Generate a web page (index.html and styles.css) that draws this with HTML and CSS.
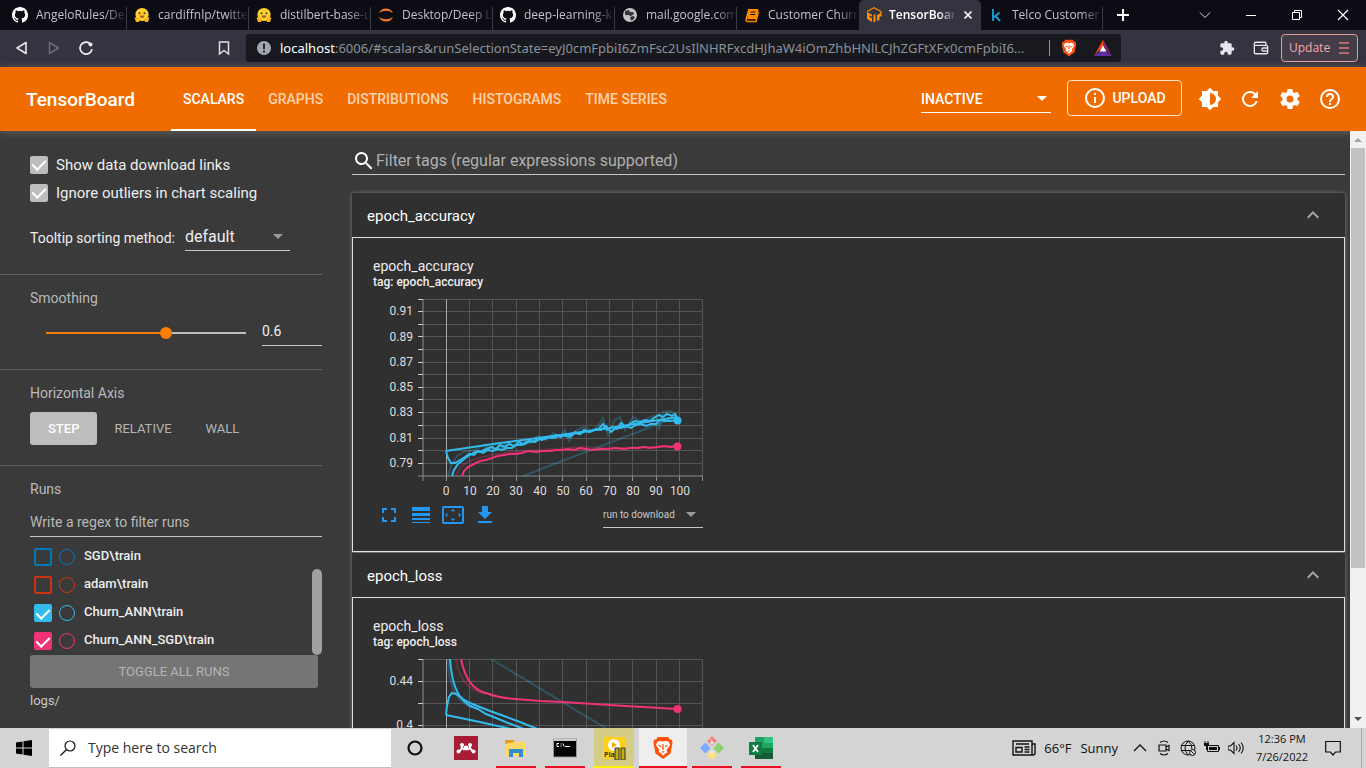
FILE: index.html
```html
<!DOCTYPE html>
<html lang="en">
<head>
<meta charset="utf-8">
<title>TensorBoard</title>
<link rel="stylesheet" href="styles.css">
</head>
<body>
<svg class="defs" width="0" height="0" aria-hidden="true">
  <defs>
    <symbol id="github" viewBox="0 0 16 16"><path fill="#fff" d="M8 0C3.58 0 0 3.58 0 8c0 3.54 2.29 6.53 5.47 7.59.4.07.55-.17.55-.38 0-.19-.01-.82-.01-1.49-2.01.37-2.53-.49-2.69-.94-.09-.23-.48-.94-.82-1.13-.28-.15-.68-.52-.01-.53.63-.01 1.08.58 1.23.82.72 1.21 1.87.87 2.33.66.07-.52.28-.87.51-1.07-1.78-.2-3.64-.89-3.64-3.95 0-.87.31-1.59.82-2.15-.08-.2-.36-1.02.08-2.12 0 0 .67-.21 2.2.82a7.6 7.6 0 0 1 4 0c1.53-1.04 2.2-.82 2.2-.82.44 1.1.16 1.92.08 2.12.51.56.82 1.27.82 2.15 0 3.07-1.87 3.75-3.65 3.95.29.25.54.73.54 1.48 0 1.07-.01 1.93-.01 2.2 0 .21.15.46.55.38A8 8 0 0 0 16 8c0-4.42-3.58-8-8-8z"/></symbol>
    <symbol id="hug" viewBox="0 0 16 16"><circle cx="8" cy="7.500" r="6.600" fill="#ffcf2b"/><path d="M.5 10.500l2.500 0 2.500 2-.5 2.500H2zM15.500 10.500l-2.500 0-2.500 2 .5 2.500h3z" fill="#ffb31a"/><circle cx="5.500" cy="6.300" r="1" fill="#3a3b45"/><circle cx="10.500" cy="6.300" r="1" fill="#3a3b45"/><path d="M5.500 8.500h5Q10 11 8 11T5.500 8.500" fill="#ad5a2b"/></symbol>
    <symbol id="brave" viewBox="0 0 20 24"><path d="M5 1h10l2 2.500 2 .3.500 3.200-2 10.500L10 23 2.500 17.500.5 7 1 3.800 3 3.500z" fill="#fb5210"/><path d="M4.500 5.500l3-.5 2.500.6 2.500-.6 3 .5 1.500 3.500-3.500 5 1 2.500-2.500 1-2 2.500L8 17l-2.500-1 1-2L3 9z" fill="#fff"/><path d="M5 9l3 1-.5 1.200zM15 9l-3 1 .5 1.200zM8.700 15.500h2.600L10 16.800zM9.700 8h.6l.4 5-.7.700-.7-.7z" fill="#fb5210" stroke="#fb5210" stroke-width=".4"/></symbol>
    <symbol id="chevron" viewBox="0 0 24 24"><path fill="#a6a6a6" d="M12 8l-6 6 1.400 1.400 4.600-4.600 4.600 4.600L18 14z"/></symbol>
    <symbol id="fullscreen" viewBox="0 0 24 24"><path fill="#2196f3" d="M7 14H5v5h5v-2H7v-3zm-2-4h2V7h3V5H5v5zm12 7h-3v2h5v-5h-2v3zM14 5v2h3v3h2V5h-5z"/></symbol>
    <symbol id="lines" viewBox="0 0 20 20"><path fill="#2196f3" d="M1 2h18v4H1zM1 8h18v3H1zM1 13h18v2H1zM1 17h18v1H1z"/></symbol>
    <symbol id="fit" viewBox="0 0 22 18"><rect x="1" y="1" width="20" height="16" rx="1" fill="none" stroke="#2196f3" stroke-width="2"/><path fill="#2196f3" d="M11 3l2.300 2.300H8.700zM11 15l2.300-2.300H8.700zM3 9l2.300-2.300v4.600zM19 9l-2.300-2.300v4.600z"/></symbol>
    <symbol id="download" viewBox="0 0 24 24"><path fill="#2196f3" d="M19 9h-4V3H9v6H5l7 7 7-7zM5 18v2h14v-2H5z"/></symbol>
  </defs>
</svg>

<div class="tabstrip">
  <div class="tab"><svg class="fav"><use href="#github"/></svg><span class="tab-title">AngeloRules/De</span></div>
  <div class="tab"><svg class="fav"><use href="#hug"/></svg><span class="tab-title">cardiffnlp/twitte</span></div>
  <div class="tab"><svg class="fav"><use href="#hug"/></svg><span class="tab-title">distilbert-base-u</span></div>
  <div class="tab"><svg class="fav" viewBox="0 0 16 16"><path d="M1 6Q3 1.500 8 1.500T15 6Q11.500 3.800 8 3.800T1 6M1 10Q3 14.500 8 14.500T15 10Q11.500 12.200 8 12.200T1 10" fill="#f37726"/></svg><span class="tab-title">Desktop/Deep L</span></div>
  <div class="tab"><svg class="fav"><use href="#github"/></svg><span class="tab-title">deep-learning-k</span></div>
  <div class="tab"><svg class="fav" viewBox="0 0 16 16"><circle cx="8" cy="8" r="7" fill="#c4c4c8"/><path d="M3 4l4-1 1 2 3 0 1 2-3 2-3-1-3 0zM8 10l3-1 2 1-2 3-2 .5z" fill="#34353c"/></svg><span class="tab-title">mail.google.com</span></div>
  <div class="tab last"><svg class="fav" viewBox="0 0 16 16"><path d="M5 2h9.500L12 13H3z" fill="#ff8a00"/><path d="M5 2L2 12.500Q2 14.500 4 14.500h8l2.500-10" fill="none" stroke="#ff8a00" stroke-width="1.500"/><path d="M6.500 5h5M6 7.500h5M3 12.700h8.500" stroke="#111" stroke-width="1"/></svg><span class="tab-title">Customer Churn</span></div>
  <div class="tab active"><svg class="fav" viewBox="0 0 16 16"><path d="M1 4.500L8 .8l7 3.700v5" fill="none" stroke="#ff8a00" stroke-width="1.200"/><path d="M1 5l5 2.500v2L3.500 8.500v1.500L6 11v4L1 12zM7.500 8l2-1v7.500l-2 1zM11 8l4-2v3l-1.500 1v3L11 14z" fill="#ff8a00"/></svg><span class="tab-title">TensorBoard</span><svg class="tab-close" viewBox="0 0 10 10"><path d="M1.500 1.500l7 7m0-7l-7 7" stroke="#fff" stroke-width="1.700"/></svg></div>
  <div class="tab kaggle"><svg class="fav" viewBox="0 0 16 16"><path d="M5 2v12M11.500 5.500L5.500 10.500M7.500 9l4.500 5" stroke="#1a9bd0" stroke-width="1.900" fill="none"/></svg><span class="tab-title">Telco Customer</span></div>
  <svg class="newtab" viewBox="0 0 12 12"><path d="M6 0v12M0 6h12" stroke="#fff" stroke-width="2"/></svg>
  <div class="winbtns">
    <svg viewBox="0 0 12 12"><path d="M1 3.500l5 5 5-5" stroke="#ddd" fill="none"/></svg>
    <svg viewBox="0 0 12 12"><path d="M1 6.500h10" stroke="#fff"/></svg>
    <svg viewBox="0 0 12 12"><path d="M1.500 3.500h7v7h-7zM3.500 3.500v-2h7v7h-2" stroke="#fff" fill="none"/></svg>
    <svg viewBox="0 0 12 12"><path d="M1 1l10 10m0-10L1 11" stroke="#fff" stroke-width="1.200"/></svg>
  </div>
</div>

<div class="toolbar">
  <div class="nav">
    <svg viewBox="0 0 16 16"><path d="M12 2.500v11L3 8z" fill="none" stroke="#e6e6ea" stroke-width="1.600" stroke-linejoin="round"/></svg>
    <svg viewBox="0 0 16 16"><path d="M3.500 2.500v11l9-5.500z" fill="none" stroke="#6b6c77" stroke-width="1.500" stroke-linejoin="round"/></svg>
    <svg viewBox="0 0 16 16"><path d="M11.500 3.200A6 6 0 1 0 14 9" fill="none" stroke="#f0f0f3" stroke-width="1.700"/><circle cx="12.500" cy="4.500" r="2" fill="#f0f0f3"/></svg>
  </div>
  <svg class="bookmark" viewBox="0 0 16 16"><path d="M3.500 2h9v12L8 10.500 3.500 14z" fill="none" stroke="#dedee3" stroke-width="1.500"/></svg>
  <div class="urlbar">
    <svg class="info" viewBox="0 0 14 14"><circle cx="7" cy="7" r="7" fill="#a5a7b0"/><path d="M7 2.500v5.500M7 9.500v2" stroke="#17191f" stroke-width="1.800"/></svg>
    <div class="url"><b>localhost</b>:6006/#scalars&amp;runSelectionState=eyJ0cmFpbiI6ZmFsc2UsIlNHRFxcdHJhaW4iOmZhbHNlLCJhZGFtXFx0cmFpbiI6...</div>
    <i class="urlsep"></i>
    <svg class="shield" viewBox="0 0 20 24"><use href="#brave"/></svg>
    <svg class="bat" viewBox="0 0 18 16"><path d="M9 0l4.500 8L9 6.500 5 10.500 0 16z" fill="#ff4a16"/><path d="M9 0l9 16-5.500-5.500L9 5z" fill="#8b2478"/><path d="M0 16h18l-5.500-4.500h-7z" fill="#5b2fa0"/><path d="M9 5.500l3.500 6h-7z" fill="#fff"/></svg>
  </div>
  <div class="extras">
    <svg viewBox="0 0 24 24"><path fill="#e6e6ea" d="M20.500 11H19V7a2 2 0 0 0-2-2h-4V3.500a2.500 2.500 0 0 0-5 0V5H4a2 2 0 0 0-2 2v3.800h1.500a2.700 2.700 0 0 1 0 5.400H2V20c0 1.100.9 2 2 2h3.800v-1.500a2.700 2.700 0 0 1 5.400 0V22H17a2 2 0 0 0 2-2v-4h1.500a2.500 2.500 0 0 0 0-5z"/></svg>
    <svg viewBox="0 0 18 16"><path d="M3 5h12q1.500 0 1.500 1.500V13q0 1.500-1.500 1.500H3q-1.500 0-1.500-1.500V3Q1.500 1.500 3 1.500h10.500q1 0 1 1V5M1.500 4Q2 5 3 5M16.500 8h-5q-1.500 0-1.500 1.700t1.500 1.700h5" fill="none" stroke="#e6e6ea" stroke-width="1.500"/></svg>
  </div>
  <button class="update"><span>Update</span><svg viewBox="0 0 10 12"><path d="M0 1h10M0 6h10M0 11h10" stroke="#d97878" stroke-width="1.600"/></svg></button>
</div>

<header class="header">
  <div class="brand">TensorBoard</div>
  <nav class="plugins">
    <a href="#scalars" class="on">SCALARS</a><a href="#graphs">GRAPHS</a><a href="#distributions">DISTRIBUTIONS</a><a href="#histograms">HISTOGRAMS</a><a href="#timeseries">TIME SERIES</a>
  </nav>
  <div class="select inactive"><select aria-label="Inactive plugins"><option>INACTIVE</option></select></div>
  <button class="upload"><svg viewBox="0 0 24 24"><path fill="#fff" d="M11 7h2v2h-2zm0 4h2v6h-2zm1-9a10 10 0 1 0 0 20 10 10 0 0 0 0-20zm0 18a8 8 0 1 1 0-16 8 8 0 0 1 0 16z"/></svg>UPLOAD</button>
  <div class="actions">
    <button aria-label="Theme"><svg viewBox="0 0 24 24"><path fill="#fff" d="M20 15.310L23.310 12 20 8.690V4h-4.690L12 .69 8.690 4H4v4.690L.69 12 4 15.310V20h4.690L12 23.310 15.310 20H20v-4.690zM12 18V6a6 6 0 0 1 0 12z"/></svg></button>
    <button aria-label="Reload"><svg viewBox="0 0 24 24"><path fill="#fff" d="M17.650 6.350A8 8 0 1 0 19.730 14h-2.080A6 6 0 1 1 12 6c1.660 0 3.140.69 4.220 1.780L13 11h7V4l-2.350 2.350z"/></svg></button>
    <button aria-label="Settings"><svg viewBox="0 0 24 24"><path fill="#fff" d="M19.430 12.980c.04-.32.07-.64.07-.98s-.03-.66-.07-.98l2.110-1.650c.19-.15.24-.42.12-.64l-2-3.460c-.12-.22-.39-.3-.61-.22l-2.490 1c-.52-.4-1.080-.73-1.690-.98l-.38-2.650A.49.49 0 0 0 14 2h-4c-.25 0-.46.18-.49.42l-.38 2.650c-.61.25-1.170.59-1.690.98l-2.490-1c-.23-.09-.49 0-.61.22l-2 3.460c-.13.22-.07.49.12.64l2.110 1.650c-.04.32-.07.65-.07.98s.03.66.07.98l-2.110 1.650c-.19.15-.24.42-.12.64l2 3.460c.12.22.39.3.61.22l2.490-1c.52.4 1.080.73 1.690.98l.38 2.650c.03.24.24.42.49.42h4c.25 0 .46-.18.49-.42l.38-2.650c.61-.25 1.170-.59 1.690-.98l2.490 1c.23.09.49 0 .61-.22l2-3.460c.12-.22.07-.49-.12-.64l-2.110-1.650zM12 15.500a3.500 3.500 0 1 1 0-7 3.500 3.500 0 0 1 0 7z"/></svg></button>
    <button aria-label="Help"><svg viewBox="0 0 24 24"><path fill="#fff" d="M11 18h2v-2h-2v2zm1-16a10 10 0 1 0 0 20 10 10 0 0 0 0-20zm0 18a8 8 0 1 1 0-16 8 8 0 0 1 0 16zm0-14a4 4 0 0 0-4 4h2a2 2 0 1 1 4 0c0 2-3 1.750-3 5h2c0-2.250 3-2.500 3-5a4 4 0 0 0-4-4z"/></svg></button>
  </div>
</header>

<main class="page">
  <aside class="sidebar">
    <section class="group options">
      <label class="check"><input type="checkbox" checked>Show data download links</label>
      <label class="check"><input type="checkbox" checked>Ignore outliers in chart scaling</label>
      <div class="sorting"><label for="sort">Tooltip sorting method:</label><div class="select"><select id="sort"><option>default</option></select></div></div>
    </section>
    <section class="group">
      <h3><label for="smooth">Smoothing</label></h3>
      <div class="smoothing"><input type="range" id="smooth" min="0" max="1" step="0.1" value="0.6"><input type="text" class="num" value="0.6" aria-label="Smoothing value"></div>
    </section>
    <section class="group axis">
      <h3>Horizontal Axis</h3>
      <div class="modes"><button class="on">STEP</button><button>RELATIVE</button><button>WALL</button></div>
    </section>
    <section class="runs">
      <h3>Runs</h3>
      <input type="text" class="regex" placeholder="Write a regex to filter runs" aria-label="Filter runs">
      <div class="runlist">
        <div class="rows">
          <label class="run sgd"><input type="checkbox"><i></i><span>SGD\train</span></label>
          <label class="run adam"><input type="checkbox"><i></i><span>adam\train</span></label>
          <label class="run ann"><input type="checkbox" checked><i></i><span>Churn_ANN\train</span></label>
          <label class="run annsgd"><input type="checkbox" checked><i></i><span>Churn_ANN_SGD\train</span></label>
        </div>
        <div class="runbar"></div>
      </div>
      <button class="toggle">TOGGLE ALL RUNS</button>
      <div class="logs">logs/</div>
    </section>
  </aside>

  <div class="content">
    <div class="filter"><svg viewBox="0 0 24 24"><path fill="#fff" d="M15.500 14h-.79l-.28-.27a6.500 6.500 0 1 0-.7.7l.27.28v.79l5 4.990L20.490 19l-4.990-5zm-6 0a4.500 4.500 0 1 1 0-9 4.500 4.500 0 0 1 0 9z"/></svg><input type="text" placeholder="Filter tags (regular expressions supported)" aria-label="Filter tags"></div>

    <section class="card">
      <button class="card-head"><span>epoch_accuracy</span><svg viewBox="0 0 24 24"><use href="#chevron"/></svg></button>
      <div class="card-body">
        <h4>epoch_accuracy</h4>
        <p>tag: epoch_accuracy</p>
        <svg class="chart" viewBox="373 292 336 208">
          <path class="grid" d="M469.500 299v177M492.500 299v177M516.500 299v177M539.500 299v177M562.500 299v177M586.500 299v177M609.500 299v177M632.500 299v177M656.500 299v177M679.500 299v177M702.500 299v177M423 299.500h280M423 311.500h280M423 324.500h280M423 336.500h280M423 349.500h280M423 362.500h280M423 374.500h280M423 387.500h280M423 399.500h280M423 412.500h280M423 425.500h280M423 438.500h280M423 450.500h280M423 463.500h280"/>
          <path class="zero" d="M446.500 299v177"/>
          <path class="axisline" d="M423 299v182M418 476h285M446.500 476v5M469.500 476v5M492.500 476v5M516.500 476v5M539.500 476v5M562.500 476v5M586.500 476v5M609.500 476v5M632.500 476v5M656.500 476v5M679.500 476v5M702.500 476v5"/>
          <path class="ticks" d="M418 299.500h5M418 311.500h5M418 324.500h5M418 336.500h5M418 349.500h5M418 362.500h5M418 374.500h5M418 387.500h5M418 399.500h5M418 412.500h5M418 425.500h5M418 438.500h5M418 450.500h5M418 463.500h5"/>
          <path class="blue faint" d="M523 476L656 425 677 416"/>
          <path class="blue faint" d="M448 476L451 466 457 456 464 452 475 450 484 445 489 450 496 443 502 448 508 441 514 447 522 440 530 443 538 436 546 440 553 433 560 438 565 430 569 441 576 430 584 427 592 431 598 426 603 418 608 435 614 421 620 417 625 430 633 417 642 422 650 417 657 416 659 430 663 412 671 411 677 418"/>
          <path class="pink faint" d="M456 476L460 468 467 462 478 458 492 455 510 452 540 450 580 447 620 448 650 447 677 446"/>
          <path class="blue" d="M446 451L500 443 560 435 610 428 677 417"/>
          <path class="blue" d="M446 451L448 458 451 463 455 463 460 460 465 457 469 454 474 455 478 451 483 453 488 450 493 451 498 449 502 450 507 448 512 448 516 445 521 445 525 444 530 441 535 442 540 439 545 439 550 437 555 438 560 435 566 436 570 437 575 433 580 434 585 431 590 432 596 429 601 430 606 426 611 432 616 428 621 428 626 426 631 428 636 425 641 424 646 426 651 424 656 424 660 420 665 421 670 421 677 420"/>
          <path class="blue" d="M452 476L454 470 458 464 463 460 468 456 475 452 482 451 486 449 491 447 496 449 500 445 505 447 509 444 514 446 519 442 523 444 528 441 533 442 538 438 542 440 547 437 552 438 556 435 561 437 566 434 570 435 575 432 580 434 584 430 589 432 594 430 598 430 603 424 607 430 612 427 617 429 621 423 626 427 631 423 635 421 640 422 645 420 650 421 654 418 659 415 663 417 667 414 672 416 675 414 677 417"/>
          <path class="pink" d="M462 476L464 471 468 467 474 464 480 461 486 460 492 458 498 456 504 455 510 454 516 454 522 453 528 451 536 452 542 451 550 451 556 450 562 450 568 449 574 450 580 448 586 449 592 450 600 449 608 449 616 448 624 449 630 448 638 448 644 447 650 448 658 447 664 446 670 447 677 446"/>
          <circle cx="677.500" cy="420.500" r="4" fill="#33bbee"/><circle cx="677.500" cy="446.500" r="4" fill="#ee3377"/>
          <g class="ylab"><text x="413" y="315">0.91</text><text x="413" y="341">0.89</text><text x="413" y="366">0.87</text><text x="413" y="391">0.85</text><text x="413" y="416">0.83</text><text x="413" y="442">0.81</text><text x="413" y="467">0.79</text></g>
          <g class="xlab"><text x="446" y="495">0</text><text x="470" y="495">10</text><text x="493" y="495">20</text><text x="516" y="495">30</text><text x="540" y="495">40</text><text x="563" y="495">50</text><text x="586" y="495">60</text><text x="610" y="495">70</text><text x="633" y="495">80</text><text x="656" y="495">90</text><text x="680" y="495">100</text></g>
        </svg>
        <div class="chart-tools">
          <button aria-label="Full screen"><svg><use href="#fullscreen"/></svg></button>
          <button aria-label="Log scale"><svg class="w20"><use href="#lines"/></svg></button>
          <button aria-label="Fit domain"><svg class="w22"><use href="#fit"/></svg></button>
          <button aria-label="Download"><svg><use href="#download"/></svg></button>
          <div class="select rundl"><select aria-label="Run to download"><option>run to download</option></select></div>
        </div>
      </div>
    </section>

    <section class="card">
      <button class="card-head"><span>epoch_loss</span><svg viewBox="0 0 24 24"><use href="#chevron"/></svg></button>
      <div class="card-body">
        <h4>epoch_loss</h4>
        <p>tag: epoch_loss</p>
        <svg class="chart" viewBox="373 652 336 208">
          <path class="grid" d="M469.500 659v177M492.500 659v177M516.500 659v177M539.500 659v177M562.500 659v177M586.500 659v177M609.500 659v177M632.500 659v177M656.500 659v177M679.500 659v177M702.500 659v177M423 659.500h280M423 681.500h280M423 703.500h280M423 725.500h280"/>
          <path class="zero" d="M446.500 659v177"/>
          <path class="axisline" d="M423 659v177"/>
          <path class="ticks" d="M418 659.500h5M418 681.500h5M418 703.500h5M418 725.500h5"/>
          <path class="blue faint" d="M491 659L627 741M448 659l1 16 4 14 6 10 9 7"/>
          <path class="pink faint" d="M456 659Q460 689 486 694"/>
          <path class="blue" d="M446 715L480 722 520 731"/>
          <path class="blue" d="M446 715L447 706 449 697 452 693 456 694 463 699 470 703 480 707 490 711 504 716 520 722 540 730"/>
          <path class="blue" d="M450 659Q452 690 464 701L470 706 478 709 486 714 496 718 508 723 524 729"/>
          <path class="pink" d="M461 659Q467 689 486 693Q499 698 516 699L540 701 563 702 609 705 660 708 677 709"/>
          <circle cx="677.500" cy="709" r="4" fill="#ee3377"/>
          <g class="ylab"><text x="413" y="685">0.44</text><text x="413" y="729">0.4</text></g>
        </svg>
      </div>
    </section>
  </div>

  <div class="scrollbar"><i class="up"></i><div class="thumb"></div><i class="down"></i></div>
</main>

<footer class="taskbar">
  <svg class="start" viewBox="0 0 16 16"><path d="M0 2.500L6.500 1.500v6H0zM7.500 1.300L16 0v7.500H7.500zM0 8.500h6.500v6L0 13.500zM7.500 8.500H16V16l-8.500-1.300z"/></svg>
  <label class="search"><svg viewBox="0 0 16 16"><circle cx="10" cy="6" r="5" fill="none" stroke="#111" stroke-width="1.200"/><path d="M6.300 9.700L.5 15.500" stroke="#111" stroke-width="1.300"/></svg><input type="text" placeholder="Type here to search"></label>
  <div class="apps">
    <div class="app plain"><svg viewBox="0 0 24 24"><circle cx="12" cy="12" r="6.500" fill="none" stroke="#111" stroke-width="2.200"/></svg></div>
    <div class="app plain"><svg viewBox="0 0 24 24"><path d="M0 0h24v24H0z" fill="#a81c35"/><path d="M4.500 15.500Q8 14 8 9.500M19.500 15.500Q16 14 16 9.500M8 9.500Q8.500 15.500 12 12Q15.500 15.500 16 9.500" fill="none" stroke="#fff" stroke-width="1.800"/><circle cx="8" cy="9" r="2" fill="#fff"/><circle cx="16" cy="9" r="2" fill="#fff"/><circle cx="12" cy="12" r="2.400" fill="#fff"/><circle cx="4.500" cy="15.500" r="2" fill="#fff"/><circle cx="19.500" cy="15.500" r="2" fill="#fff"/></svg></div>
    <div class="app"><svg viewBox="0 0 24 24"><path d="M1 4h8l2 2h11v14H1z" fill="#e5a01a"/><path d="M1 8l9-2h12v14H1z" fill="#ffd868"/><path d="M5 13h14v8h-4v-4H9v4H5z" fill="#338bd0"/></svg></div>
    <div class="app"><svg viewBox="0 0 24 24"><path d="M.5 3h23v18H.5z" fill="#050505" stroke="#999"/><path d="M1 3h22v2H1z" fill="#ccc"/><path d="M12 10.500h5M6 7.500H4v3h2M8 7.500v1m0 1v1M10 7.500l1 3" stroke="#fff" fill="none"/></svg></div>
    <div class="app player"><svg viewBox="0 0 24 24"><rect x="1" y="1" width="22" height="22" rx="2" fill="#ffd017"/><circle cx="12" cy="9" r="6" fill="#fff"/><path d="M10 6l5 3-5 3z" fill="#eeb000"/><path d="M13 12h4v12h-4zM19 12h4v12h-4z" fill="#bfae14" stroke="#333" stroke-width="1"/><text x="2" y="21" class="play-name">Pla</text></svg></div>
    <div class="app current"><svg viewBox="0 0 20 24"><use href="#brave"/></svg></div>
    <div class="app"><svg viewBox="0 0 24 24"><path d="M12 0l5 5-5 5-5-5z" fill="#ff8080"/><path d="M5.500 6.500l5 5.500-5 5.500L0 12z" fill="#7ba9ff"/><path d="M18.500 6.500L24 12l-5.500 5.500-5-5.500z" fill="#8bd16b"/><path d="M12 14l5 5-5 5-5-5z" fill="#ffe27d"/><path d="M9.500 2.500L15 8M12 6v10" stroke="#d4d4d4"/><circle cx="12" cy="6.500" r="1.500" fill="#eee"/><circle cx="12" cy="16" r="1.500" fill="#eee"/></svg></div>
    <div class="app"><svg viewBox="0 0 24 24"><path d="M6 1h18v22H6z" fill="#21a366"/><path d="M15 1h9v6h-9z" fill="#33c481"/><path d="M6 12h9v11H6zM15 12h9v5h-9z" fill="#107c41"/><path d="M6 17h18v6H6z" fill="#185c37"/><path d="M0 6h13v13H0z" fill="#107c41"/><path d="M4 9l5 7M9 9l-5 7" stroke="#fff" stroke-width="1.800"/></svg></div>
  </div>
  <div class="tray">
    <svg class="news" viewBox="0 0 24 16"><path d="M1 1h19v14H1zM20 4h3v9q0 2-2 2h-3M4 4h13M4 7.500h6V12H4zM12.500 7h5M12.500 9.500h5M12.500 12h5" fill="none" stroke="#111" stroke-width="1.400"/></svg>
    <div class="weather"><span>66°F</span><span>Sunny</span></div>
    <div class="tray-icons">
      <svg viewBox="0 0 16 16"><path d="M2 11l6-6 6 6" fill="none" stroke="#111" stroke-width="1.300"/></svg>
      <svg viewBox="0 0 16 16"><path d="M3 5h7v6H3zM10 7l3-1.500v5L10 9M4 2.500Q8-.5 12 2.500M4 13.500q4 3 8 0" fill="none" stroke="#111" stroke-width="1.200"/></svg>
      <svg viewBox="0 0 16 16"><circle cx="8" cy="8" r="7" fill="none" stroke="#111"/><path d="M1 5.500h13M1 10.500h9M8 1q-6 7 0 14M8 1q4 3 4 8" fill="none" stroke="#111"/><circle cx="12.500" cy="12.500" r="3" fill="#d4d4d4" stroke="#111"/><path d="M10.500 10.500l4 4" stroke="#111"/></svg>
      <svg viewBox="0 0 16 16"><path d="M3.500 5.500h11v6h-11z" fill="none" stroke="#111"/><path d="M5 7h8v3H5zM15 7h1v3h-1zM0 3h5v3H0z" fill="#111"/><path d="M2.500 6v4M1 1v2M4 1v2" stroke="#111"/></svg>
      <svg viewBox="0 0 16 16"><path d="M0 6h2.500L6 2.500v11L2.500 10H0zM8 5.500q2 2.500 0 5M10.500 4q3.500 4 0 8M13 2.500q4.500 5.500 0 11" fill="none" stroke="#111" stroke-width="1.100"/></svg>
    </div>
    <div class="clock"><div>12:36 PM</div><div>7/26/2022</div></div>
    <svg class="notif" viewBox="0 0 16 16"><path d="M.7 1.500h14.600v10.500H10.500L8 15l-2.500-3H.7z" fill="none" stroke="#111" stroke-width="1.200"/></svg>
    <i class="peek"></i>
  </div>
</footer>
</body>
</html>
```
FILE: styles.css
```css
* { box-sizing: border-box; }
body { margin: 0; height: 100vh; display: flex; flex-direction: column; overflow: hidden; background: #3a3a3a; color: #fff; font-family: Roboto, sans-serif; font-size: 14px; }
button, input, select { font: inherit; color: inherit; background: none; border: 0; padding: 0; margin: 0; border-radius: 0; outline: 0; }
button { cursor: pointer; }
svg { display: block; flex: none; }
h3, h4, p { margin: 0; font-weight: 400; }
.defs { position: absolute; }

/* Browser tabs */
.tabstrip { height: 30px; flex: none; display: flex; align-items: center; background: #0c0c14; padding-left: 5px; font: 12px/16px "Open Sans", sans-serif; color: #c3c3c8; }
.tab { width: 122px; height: 30px; display: flex; align-items: center; gap: 8px; padding-left: 7px; background: linear-gradient(#3b3b42, #3b3b42) right bottom / 1px 23px no-repeat; }
.tab.last { background: none; }
.tab.active { background: #33343f; border-radius: 5px 5px 0 0; padding: 0 8px 0 7px; gap: 7px; color: #fff; font-weight: 600; }
.fav { width: 16px; height: 16px; }
.tab-title { flex: 1; min-width: 0; white-space: nowrap; overflow: hidden; -webkit-mask-image: linear-gradient(90deg, #000 75%, transparent); mask-image: linear-gradient(90deg, #000 75%, transparent); }
.tab-close { width: 10px; height: 10px; }
.newtab { width: 12px; height: 12px; margin-left: 14px; }
.winbtns { display: flex; gap: 34px; margin-left: auto; padding-right: 17px; }
.winbtns svg { width: 12px; height: 12px; }

/* Browser toolbar */
.toolbar { height: 37px; flex: none; display: flex; align-items: center; background: #33343f; padding: 0 8px 1px 14px; }
.nav { display: flex; gap: 16px; }
.nav svg, .bookmark { width: 16px; height: 16px; }
.bookmark { margin: 0 14px 0 122px; }
.urlbar { flex: 1; min-width: 0; height: 28px; display: flex; align-items: center; background: #17191f; border-radius: 3px; padding: 0 9px 0 11px; font: 13px/20px "Noto Sans", sans-serif; color: #8e9197; }
.info { width: 14px; height: 14px; margin-right: 9px; }
.url { flex: 1; min-width: 0; white-space: nowrap; overflow: hidden; }
.url b { color: #fff; font-weight: 400; }
.urlsep { width: 1px; height: 16px; background: #8e9197; margin: 0 11px 0 6px; }
.shield { width: 16px; height: 18px; }
.bat { width: 18px; height: 16px; margin-left: 17px; }
.extras { display: flex; align-items: center; gap: 18px; margin: 0 12px 0 98px; }
.extras svg { width: 16px; height: 16px; }
.update { width: 77px; height: 28px; display: flex; align-items: center; justify-content: space-between; padding: 0 8px 0 7px; border: 1px solid #e59a9a; border-radius: 4px; background: #443c49; color: #f5a9a9; font: 12px/16px "Open Sans", sans-serif; }
.update svg { width: 10px; height: 12px; }

/* App header */
.header { height: 64px; flex: none; display: flex; align-items: center; background: #f06c00; padding: 0 24px 0 26px; box-shadow: 0 1px 8px rgba(255, 255, 255, .22); z-index: 1; font-weight: 500; }
.brand { width: 145px; font-size: 19px; font-weight: 500; }
.plugins { display: flex; height: 64px; }
.plugins a { display: flex; align-items: center; padding: 0 12px; color: rgba(255, 255, 255, .7); text-decoration: none; border-bottom: 2px solid transparent; border-top: 1px solid transparent; }
.plugins a.on { color: #fff; border-bottom-color: #fff; }
.select { display: flex; align-items: center; border-bottom: 1px solid #c8c8c8; position: relative; }
.select select { flex: 1; width: 100%; appearance: none; }
.select::after { content: ""; position: absolute; right: 7px; border: 5px solid transparent; border-top-color: #9b9b9b; border-bottom: 0; pointer-events: none; }
.inactive { width: 130px; height: 28px; margin-left: auto; border-color: #fff; }
.inactive::after { right: 4px; border-top-color: #fff; }
.upload { width: 115px; height: 36px; margin: 0 0 2px 16px; display: flex; align-items: center; justify-content: center; gap: 5px; border: 1px solid #ffe3cc; border-radius: 4px; font-weight: 500; }
.upload svg { width: 24px; height: 24px; }
.actions { display: flex; gap: 16px; margin-left: 16px; }
.actions svg { width: 24px; height: 24px; }

/* Page */
.page { flex: 1; min-height: 0; display: flex; overflow: hidden; }
.sidebar { width: 322px; flex: none; color: #eee; }
.group { border-bottom: 1px solid #606060; padding: 13px 0 0 30px; height: 95px; }
.group.options { height: 144px; padding-top: 20px; }
.group.axis { height: 96px; }
h3 { font-size: 14px; line-height: 20px; color: #b9b9b9; }
.check { display: flex; align-items: center; height: 28px; gap: 8px; font-size: 15px; }
.check input, .run input { appearance: none; width: 18px; height: 18px; border-radius: 2px; background: #bdbdbd; display: grid; place-items: center; }
.check input:checked::before, .run input:checked::before { content: ""; width: 6px; height: 11px; margin-bottom: 3px; border: solid #fff; border-width: 0 2px 2px 0; transform: rotate(45deg); }
.sorting { display: flex; align-items: center; gap: 10px; margin-top: 16px; font-size: 14px; }
.sorting label { padding-top: 2px; }
.sorting .select { width: 105px; height: 28px; font-size: 16px; }
.sorting .select::after { right: 7px; }
.smoothing { display: flex; align-items: center; gap: 10px; padding-left: 10px; margin-top: 10px; }
.smoothing input[type=range] { appearance: none; width: 212px; height: 12px; margin-top: 1px; background: linear-gradient(#f57c00, #f57c00) 6px 50% / 120px 2px no-repeat, linear-gradient(#bdbdbd, #bdbdbd) 6px 50% / 200px 2px no-repeat; }
.smoothing input[type=range]::-webkit-slider-thumb { appearance: none; width: 12px; height: 12px; border-radius: 50%; background: #ff8000; }
.num { width: 60px; height: 28px; border-bottom: 1px solid #c8c8c8; padding-bottom: 1px; }
.modes { display: flex; margin-top: 9px; font-size: 13px; }
.modes button { height: 33px; padding: 0 17px; color: #b5b5b5; border-radius: 3px; }
.modes button.on { background: #bdbdbd; color: #fff; font-weight: 500; padding: 0 18px; }
.runs { padding: 13px 0 0 30px; }
.regex { display: block; width: 100%; height: 28px; margin-top: 10px; padding-bottom: 2px; border-bottom: 1px solid #c8c8c8; }
.regex::placeholder { color: #b9b9b9; opacity: 1; }
.runlist { display: flex; height: 118px; padding-top: 6px; }
.rows { flex: 1; }
.run { display: flex; align-items: center; height: 28px; padding-left: 4px; font-size: 13px; font-weight: 500; }
.run span { padding-bottom: 3px; }
.run input { background: none; border: 2px solid var(--c); }
.run input:checked { background: var(--c); }
.run i { width: 16px; height: 16px; border: 1px solid var(--c); border-radius: 50%; margin: 0 9px 0 7px; }
.sgd { --c: #0077bb; } .adam { --c: #cc3311; } .ann { --c: #33bbee; } .annsgd { --c: #ee3377; }
.runbar { width: 10px; height: 86px; align-self: flex-end; border-radius: 5px; background: #a0a0a0; }
.toggle { display: block; width: 288px; height: 33px; background: #757575; color: #b5b5b5; border-radius: 3px; font-size: 13px; }
.logs { font-size: 13px; line-height: 20px; margin-top: 3px; color: #c8c8c8; }

.content { flex: 1; min-width: 0; padding: 16px 5px 0 30px; }
.filter { display: flex; align-items: center; height: 28px; border-bottom: 1px solid #c8c8c8; font-size: 16px; margin-bottom: 18px; }
.filter svg { width: 24px; height: 24px; }
.filter input { flex: 1; }
.filter input::placeholder { color: #b0b0b0; opacity: 1; }
.card { box-shadow: 0 0 4px rgba(255, 255, 255, .35); margin-bottom: 1px; }
.card-head { display: flex; width: 100%; height: 44px; align-items: center; justify-content: space-between; padding: 0 20px 0 15px; background: #303030; font-size: 15px; }
.card-head span { padding-top: 2px; }
.card-head svg { width: 24px; height: 24px; }
.card-body { height: 315px; border: 1px solid #e0e0e0; background: #303030; padding: 20px 20px 0; color: #eee; }
h4 { font-size: 14px; line-height: 16px; }
.card-body p { font-size: 12px; line-height: 16px; font-weight: 500; }
.chart { width: 336px; height: 208px; margin-top: 2px; font-size: 12px; fill: #ddd; }
.chart path { fill: none; }
.grid { stroke: #555; }
.zero { stroke: #a8a8a8; }
.axisline { stroke: #8d8d8d; }
.ticks { stroke: #d0d0d0; }
.blue { stroke: #33bbee; stroke-width: 2; }
.pink { stroke: #ee3377; stroke-width: 2; }
.faint { opacity: .25; }
.ylab { text-anchor: end; }
.xlab { text-anchor: middle; }
.chart-tools { display: flex; align-items: center; width: 330px; height: 30px; }
.chart-tools button { width: 32px; height: 24px; display: grid; place-items: center; }
.chart-tools svg { width: 24px; height: 24px; }
.chart-tools .w20 { width: 20px; height: 20px; }
.chart-tools .w22 { width: 22px; height: 18px; }
.rundl { width: 100px; height: 26px; margin-left: auto; font-size: 10px; color: #c8c8c8; }

.scrollbar { width: 16px; flex: none; display: flex; flex-direction: column; align-items: center; background: #f1f1f1; padding: 7px 0; }
.scrollbar .up, .scrollbar .down { border: 4px solid transparent; }
.scrollbar .up { border-top: 0; border-bottom-color: #a3a3a3; }
.scrollbar .down { border-bottom: 0; border-top-color: #505050; margin-top: auto; }
.thumb { width: 14px; height: 72%; background: #c1c1c1; margin-top: 6px; }

/* Taskbar */
.taskbar { height: 40px; flex: none; display: flex; align-items: center; background: #d4d4d4; color: #111; font: 14px/20px "Open Sans", sans-serif; }
.start { width: 16px; height: 16px; margin: 0 17px 0 16px; }
.search { width: 342px; height: 39px; display: flex; align-items: center; gap: 12px; background: #fff; border-bottom: 1px solid #c0c0c0; padding-left: 11px; }
.search svg { width: 16px; height: 16px; }
.search input { flex: 1; }
.search input::placeholder { color: #333; opacity: 1; }
.apps { display: flex; height: 40px; gap: 9px; }
.app { width: 40px; display: grid; place-items: center; border-bottom: 2px solid #e81123; padding-top: 2px; }
.app svg { width: 24px; height: 24px; }
.app.plain { width: 42px; border-color: transparent; }
.app.plain:first-child { margin-left: 3px; }
.app.player { background: #d3cd86; border-color: #fff200; }
.app.current { width: 48px; margin: 0 -4px; background: #eee; }
.play-name { font: 700 7px "Open Sans", sans-serif; fill: #333; }
.tray { display: flex; align-items: center; margin-left: auto; height: 40px; }
.news { width: 24px; height: 16px; margin-right: 8px; }
.weather { display: flex; gap: 9px; font-size: 13px; }
.tray-icons { display: flex; gap: 8px; margin: 0 11px 0 14px; }
.tray-icons svg { width: 16px; height: 16px; }
.clock { width: 54px; font-size: 11px; line-height: 18px; text-align: center; }
.notif { width: 16px; height: 16px; margin: 0 20px 0 16px; }
.peek { width: 5px; height: 40px; border-left: 1px solid #aaa; }
```
